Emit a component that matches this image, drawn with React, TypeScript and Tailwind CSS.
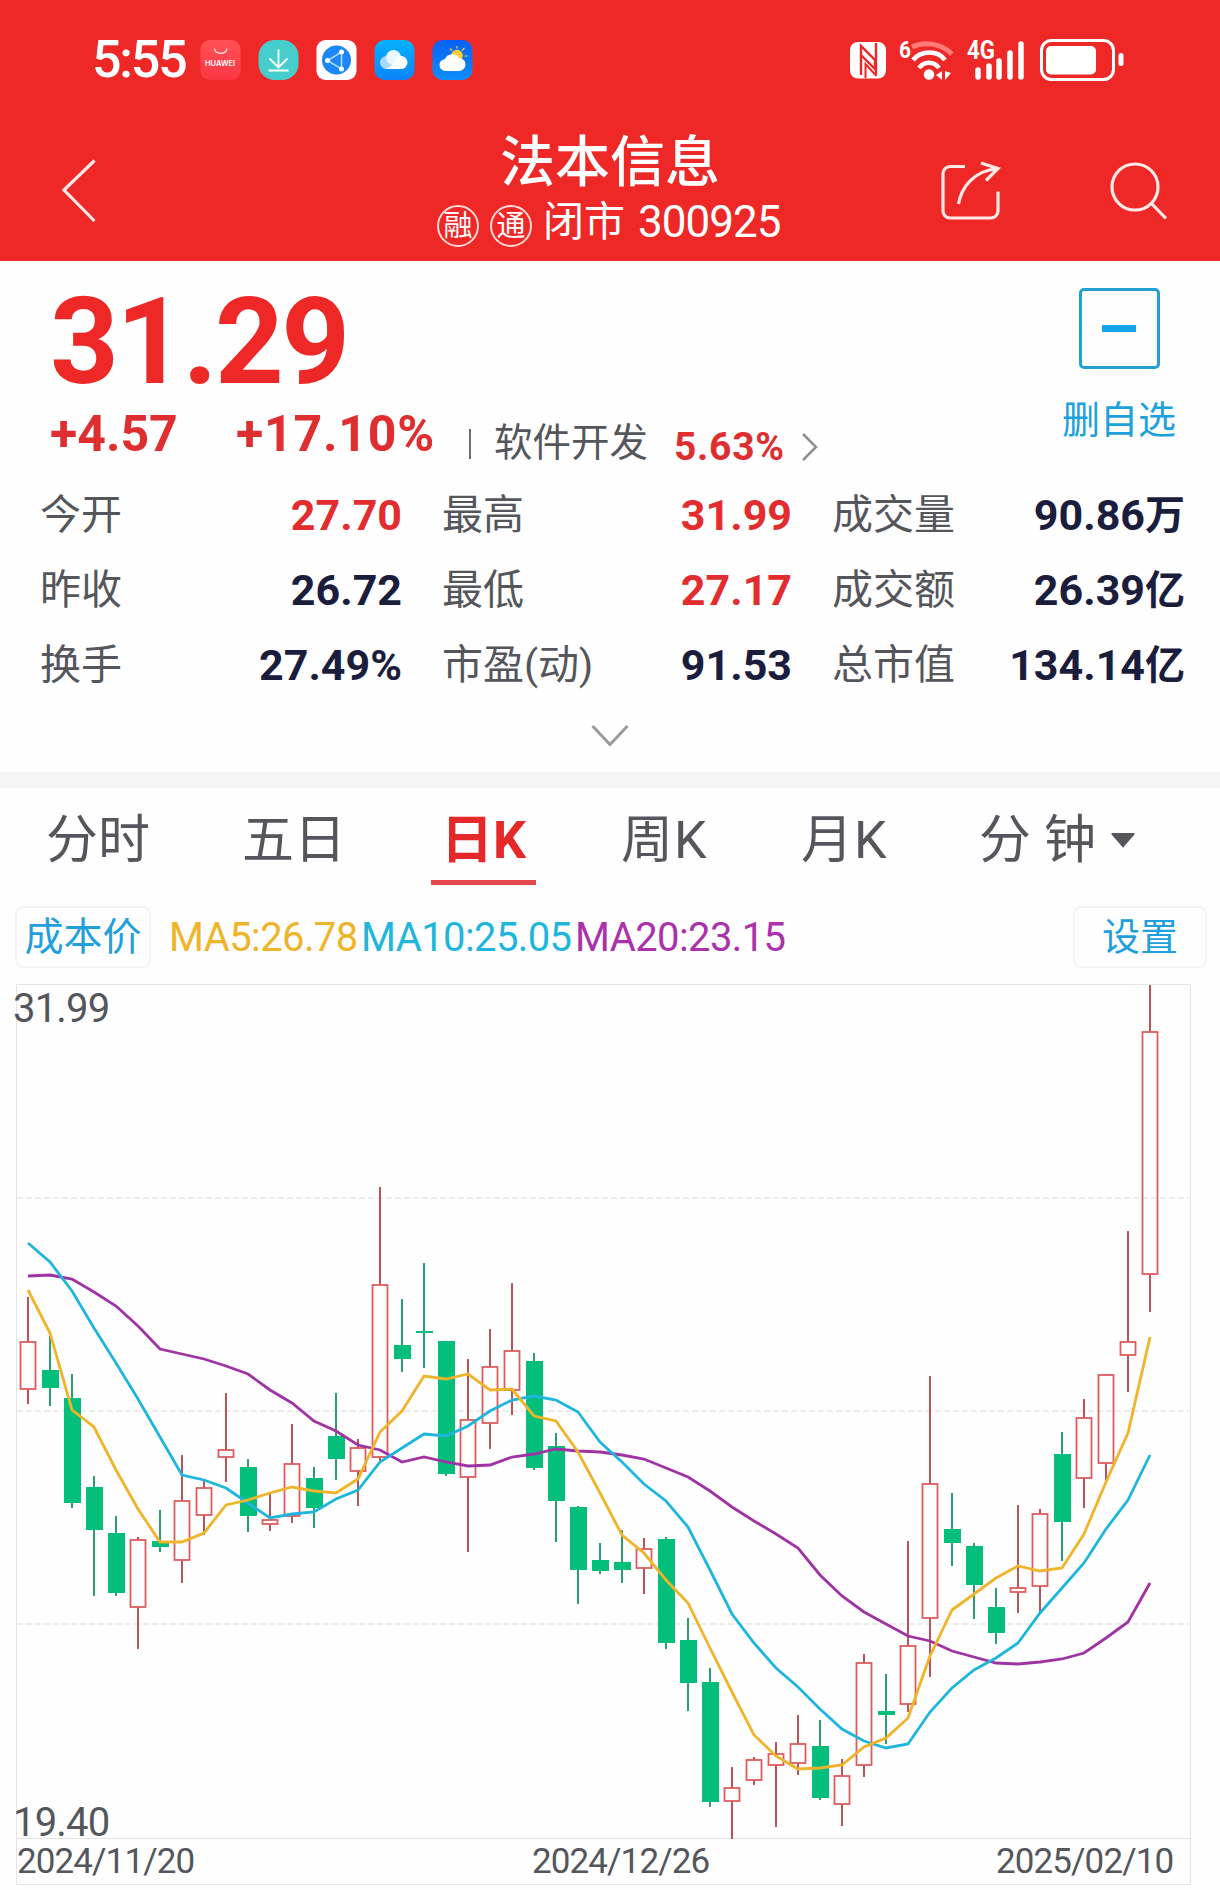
type Candle = [up: number, high: number, top: number, bottom: number, low: number];

const CANDLES: Candle[] = [
  [1, 1297, 1342, 1389, 1404],
  [0, 1336, 1370, 1388, 1406],
  [0, 1374, 1398, 1503, 1508],
  [0, 1476, 1487, 1530, 1596],
  [0, 1516, 1533, 1593, 1596],
  [1, 1537, 1540, 1607, 1649],
  [0, 1510, 1541, 1547, 1552],
  [1, 1455, 1501, 1560, 1583],
  [1, 1480, 1488, 1515, 1535],
  [1, 1393, 1450, 1457, 1482],
  [0, 1459, 1467, 1516, 1532],
  [1, 1494, 1520, 1524, 1531],
  [1, 1424, 1464, 1516, 1523],
  [0, 1467, 1478, 1508, 1528],
  [0, 1393, 1436, 1459, 1480],
  [1, 1439, 1448, 1471, 1506],
  [1, 1187, 1285, 1457, 1462],
  [0, 1299, 1345, 1359, 1372],
  [0, 1263, 1331, 1333, 1368],
  [0, 1341, 1341, 1474, 1476],
  [1, 1359, 1420, 1477, 1552],
  [1, 1329, 1367, 1423, 1449],
  [1, 1283, 1351, 1390, 1415],
  [0, 1353, 1361, 1468, 1470],
  [0, 1433, 1446, 1501, 1542],
  [0, 1506, 1507, 1570, 1604],
  [0, 1543, 1560, 1571, 1574],
  [0, 1530, 1562, 1570, 1583],
  [1, 1538, 1549, 1568, 1594],
  [0, 1537, 1539, 1643, 1649],
  [0, 1618, 1640, 1683, 1711],
  [0, 1668, 1682, 1802, 1807],
  [1, 1767, 1788, 1801, 1839],
  [1, 1757, 1760, 1780, 1785],
  [1, 1742, 1754, 1765, 1827],
  [1, 1715, 1744, 1763, 1775],
  [0, 1720, 1746, 1798, 1800],
  [1, 1759, 1776, 1804, 1826],
  [1, 1654, 1663, 1765, 1777],
  [0, 1674, 1711, 1715, 1744],
  [1, 1541, 1646, 1704, 1712],
  [1, 1376, 1484, 1618, 1677],
  [0, 1493, 1529, 1543, 1566],
  [0, 1543, 1546, 1585, 1619],
  [0, 1588, 1607, 1633, 1644],
  [1, 1505, 1588, 1592, 1613],
  [1, 1509, 1514, 1586, 1612],
  [0, 1432, 1454, 1522, 1561],
  [1, 1399, 1418, 1478, 1508],
  [1, 1375, 1375, 1463, 1480],
  [1, 1231, 1342, 1355, 1392],
  [1, 985, 1032, 1274, 1312],
];

const AVERAGES = [
  {
    color: "#a033a3",
    ys: [1276, 1275, 1279, 1292, 1306, 1326, 1349, 1354, 1359, 1366, 1374, 1390, 1403, 1421, 1431, 1445, 1450, 1462, 1457, 1462, 1466, 1465, 1457, 1454, 1449, 1451, 1452, 1455, 1459, 1468, 1477, 1491, 1507, 1521, 1534, 1548, 1575, 1596, 1612, 1624, 1636, 1641, 1651, 1657, 1663, 1664, 1662, 1659, 1653, 1638, 1622, 1583],
  },
  {
    color: "#1eb6dd",
    ys: [1243, 1262, 1291, 1328, 1363, 1399, 1437, 1475, 1480, 1488, 1503, 1518, 1514, 1512, 1499, 1490, 1462, 1448, 1434, 1436, 1426, 1411, 1400, 1396, 1400, 1412, 1442, 1462, 1484, 1501, 1527, 1570, 1614, 1643, 1668, 1687, 1709, 1729, 1741, 1748, 1744, 1712, 1688, 1670, 1658, 1643, 1613, 1588, 1563, 1529, 1500, 1455],
  },
  {
    color: "#efb429",
    ys: [1290, 1333, 1410, 1427, 1470, 1509, 1542, 1542, 1533, 1505, 1500, 1493, 1487, 1491, 1493, 1479, 1432, 1411, 1376, 1379, 1374, 1390, 1389, 1416, 1421, 1452, 1493, 1535, 1553, 1580, 1603, 1648, 1692, 1735, 1756, 1769, 1768, 1765, 1747, 1738, 1718, 1656, 1610, 1594, 1578, 1566, 1571, 1568, 1534, 1482, 1433, 1337],
  },
];

const STATS = [
  { label: "今开", value: "27.70", up: true },
  { label: "最高", value: "31.99", up: true },
  { label: "成交量", value: "90.86", unit: "万" },
  { label: "昨收", value: "26.72" },
  { label: "最低", value: "27.17", up: true },
  { label: "成交额", value: "26.39", unit: "亿" },
  { label: "换手", value: "27.49%" },
  { label: "市盈(动)", value: "91.53" },
  { label: "总市值", value: "134.14", unit: "亿" },
];

const candleX = (i: number) => 28 + i * 22;

function AppIcons() {
  return (
    <svg width="274" height="40" viewBox="0 0 274 40" aria-hidden="true">
      <defs>
        <linearGradient id="hw" x1="0" y1="0" x2="0" y2="1">
          <stop offset="0" stopColor="#ff5257" />
          <stop offset="1" stopColor="#fb3642" />
        </linearGradient>
        <linearGradient id="cloud" x1="0" y1="0" x2="0" y2="1">
          <stop offset="0" stopColor="#06b2fb" />
          <stop offset="1" stopColor="#0b84fb" />
        </linearGradient>
        <linearGradient id="sky" x1="0" y1="0" x2="0" y2="1">
          <stop offset="0" stopColor="#0860f4" />
          <stop offset="1" stopColor="#0d8ffc" />
        </linearGradient>
      </defs>
      <rect x="0.5" width="40" height="40" rx="9" fill="url(#hw)" />
      <path d="M14.500 8.500c1 6.500 11.500 6.500 12.500 0" fill="none" stroke="#fff" strokeWidth="1.200" />
      <text x="5" y="25.500" fontSize="7.500" fontWeight="600" fill="#fff" fontFamily="Inter, sans-serif">HUAWEI</text>
      <rect x="58.500" width="40" height="40" rx="16" fill="#47cdcb" />
      <path d="M78.500 9.500v17M69.500 18.500l9 9 9-9M68.500 30.500h20" fill="none" stroke="#fff" strokeWidth="1.800" />
      <rect x="116.500" width="40" height="40" rx="9" fill="#fff" />
      <circle cx="136.500" cy="20" r="14.500" fill="#1d88f4" />
      <path d="M127.500 20.500l14-8.500v17z" fill="none" stroke="#a8dcff" strokeWidth="1.500" />
      <g fill="#fff">
        <circle cx="127.500" cy="20.500" r="2.500" />
        <circle cx="141.500" cy="12" r="2.500" />
        <circle cx="141.500" cy="29" r="2.500" />
      </g>
      <rect x="174.500" width="40" height="40" rx="10" fill="url(#cloud)" />
      <circle cx="186.500" cy="22.500" r="6.500" fill="#a9dafc" />
      <circle cx="193.500" cy="17.500" r="7.500" fill="#eaf7ff" />
      <path d="M186 29h15a6.500 6.500 0 1 0-6-9c-2 5-5 7-9 9z" fill="#fff" />
      <rect x="232.500" width="40" height="40" rx="10" fill="url(#sky)" />
      <circle cx="257" cy="15.500" r="5.800" fill="#fbd034" />
      <path d="M257 8.500v-2.500M262 10.500l2.500-2.500M264.500 16h3M262.500 20l2.500 2M252 10.500l-2-2" stroke="#fbd034" strokeWidth="1.200" />
      <path d="M246 31a6 6 0 0 1-1-12 8 8 0 0 1 14-1 6.500 6.500 0 0 1 0 13z" fill="#fff" />
    </svg>
  );
}

function SystemIcons() {
  return (
    <svg width="280" height="46" viewBox="848 36 280 46" fill="none" aria-hidden="true">
      <rect x="850" y="41" width="36" height="36.500" rx="8" fill="#fff" />
      <path d="M861 74V45l14 14v9l-14-14" stroke="#ee2827" strokeWidth="2.400" />
      <path d="M876 42v31.500" stroke="#ee2827" strokeWidth="2.400" />
      <path d="M865.500 77V63l11 12" stroke="#ee2827" strokeWidth="2" />
      <text x="899" y="56.500" fontSize="24" fontWeight="700" fill="#fff" fontFamily="Roboto, sans-serif" textLength="12" lengthAdjust="spacingAndGlyphs">6</text>
      <path d="M912 46c12-6 29-4 40 7" stroke="#ff7b78" strokeWidth="5" />
      <path d="M913 59c8-10 25-10 32 0M919 67c5-7 15-7 20 0" stroke="#fff" strokeWidth="4.500" />
      <circle cx="929" cy="73.500" r="5.200" fill="#fff" />
      <path d="M942 70v9l-6-5zM945 70v9l6-7z" fill="#fff" />
      <text x="967" y="58" fontSize="25" fontWeight="700" fill="#fff" fontFamily="Roboto, sans-serif" textLength="28" lengthAdjust="spacingAndGlyphs">4G</text>
      <path d="M978 69v7M989 65v11M999 60v16M1010 52v24M1021 43v33" stroke="#fff" strokeWidth="5.500" strokeLinecap="round" />
      <rect x="1041.500" y="39.500" width="72" height="39" rx="10" stroke="#fff" strokeWidth="3" />
      <rect x="1046" y="45" width="50" height="28.500" rx="5" fill="#fff" />
      <rect x="1118.500" y="52" width="5" height="13" rx="2.500" fill="#fff" />
    </svg>
  );
}

function Header() {
  return (
    <header className="h-[261px] bg-[#ee2827] text-white">
      <div className="flex h-[100px] items-center justify-between px-[92px] pt-5">
        <div className="flex items-center gap-[13px]">
          <span className="w-[95px] whitespace-nowrap text-[52px] font-medium leading-none tracking-[-2.200px]">5:55</span>
          <AppIcons />
        </div>
        <SystemIcons />
      </div>
      <div className="flex h-[161px] items-start pl-[60px] pr-[52px]">
        <svg className="mt-[58px]" width="37" height="66" viewBox="60 158 37 66" fill="none" aria-hidden="true">
          <path d="M94.500 160.500L64 190l30.500 31" stroke="#ffe9e6" strokeWidth="3.200" />
        </svg>
        <div className="ml-[340px] w-[360px]">
          <h1 className="mt-[34px] pl-[63px] text-[55px] font-medium leading-[56px]">法本信息</h1>
          <div className="mt-[6px] flex h-[52px] items-center whitespace-nowrap">
            <span className="mt-2 grid size-[42px] place-items-center rounded-full border-2 border-[#ffd9d5] text-[29px] leading-none">融</span>
            <span className="ml-[11px] mt-2 grid size-[42px] place-items-center rounded-full border-2 border-[#ffd9d5] text-[29px] leading-none">通</span>
            <span className="ml-[11px] text-[41px] leading-none">闭市</span>
            <span className="ml-[13px] text-[44px] leading-none tracking-[-1px]">300925</span>
          </div>
        </div>
        <svg className="ml-auto mt-[60px]" width="230" height="62" viewBox="938 160 230 62" fill="none" stroke="#ffe9e6" strokeWidth="3.200" aria-hidden="true">
          <path d="M965 166.500h-15a7 7 0 0 0-7 7V211a7 7 0 0 0 7 7h41a7 7 0 0 0 7-7v-19.500M958.500 204c3-17 15-33 39-35.500M981 163l17 5.500-12 12" />
          <circle cx="1135" cy="187" r="23" />
          <path d="M1151 203l15 15.500" />
        </svg>
      </div>
    </header>
  );
}

function Quote() {
  return (
    <section className="h-[510px]">
      <div className="flex h-[216px] justify-between pl-[50px] pr-[43px]">
        <div className="whitespace-nowrap">
          <div className="mt-[21px] h-[120px] text-[120px] font-bold leading-[120px] tracking-[-2.500px] text-[#ee2827]">31.29</div>
          <div className="mt-[4px] flex h-[56px] items-center font-bold text-[#de2e30]">
            <span className="w-[186px] text-[50px] leading-none">+4.57</span>
            <span className="w-[233px] text-[50px] leading-none tracking-[0.800px]">+17.10%</span>
            <span className="mt-5 h-[30px] w-[2px] bg-[#6b6b70]" />
            <span className="ml-[23px] mt-[19px] w-[180px] text-[38.500px] font-normal leading-none text-[#55565c]">软件开发</span>
            <span className="mt-[26px] w-[127px] text-[39px] leading-none tracking-[0.700px]">5.63%</span>
            <svg className="mt-[26px]" width="18" height="28" viewBox="0 0 18 28" fill="none" aria-hidden="true">
              <path d="M2 1l13 13L2 27" stroke="#8f9094" strokeWidth="2.500" />
            </svg>
          </div>
        </div>
        <div className="flex w-[116px] flex-col items-center pt-[27px] text-[#1da1dc]">
          <div className="grid size-[81px] place-items-center rounded-[5px] border-[3px] border-[#249fd3]">
            <span className="h-[7px] w-[34px] bg-[#12a5ea]" />
          </div>
          <span className="mt-[30px] whitespace-nowrap text-[38px] leading-[42px]">删自选</span>
        </div>
      </div>
      <dl className="grid grid-cols-[362px_350px_353px] gap-x-[40px] pl-[40px]">
        {STATS.map((s) => (
          <div key={s.label} className="flex h-[75px] items-center justify-between whitespace-nowrap pt-0.5">
            <dt className="text-[41px] leading-none text-[#55565c]">{s.label}</dt>
            <dd className={s.up ? "flex items-center font-bold text-[#e22c2e]" : "flex items-center font-bold text-[#1b1d3c]"}>
              <span className="text-[43px] leading-none">{s.value}</span>
              {s.unit && <span className="text-[40px] leading-none">{s.unit}</span>}
            </dd>
          </div>
        ))}
      </dl>
      <svg className="mx-auto mt-[20px]" width="38" height="26" viewBox="0 0 38 26" fill="none" aria-hidden="true">
        <path d="M1.500 4L19 22.500 36.500 4" stroke="#9b9b9d" strokeWidth="3" />
      </svg>
    </section>
  );
}

function Tabs() {
  return (
    <nav className="flex h-[100px] items-start whitespace-nowrap pl-[46px] text-[52px] leading-[108px] text-[#55565c]">
      <span className="w-[196px]">分时</span>
      <span className="w-[189px]">五日</span>
      <span className="h-[98px] w-[105px] border-b-[5px] border-[#e5484c] text-center font-bold text-[#e5282a]">日K</span>
      <span className="ml-[85px] w-[180px] tracking-[1px]">周K</span>
      <span className="w-[178px] tracking-[1px]">月K</span>
      <span className="w-[132px]">分 钟</span>
      <svg className="mt-[45px]" width="24" height="16" viewBox="0 0 24 16" aria-hidden="true">
        <path d="M2 1h20a1 1 0 0 1 1 2L13 14.500a1 1 0 0 1-2 0L1 3a1 1 0 0 1 1-2z" fill="#55565c" />
      </svg>
    </nav>
  );
}

function Legend() {
  return (
    <div className="flex h-[97px] items-start whitespace-nowrap pl-[15px] pr-[13px] pt-[19px]">
      <button className="h-[62px] w-[136px] rounded-lg border-2 border-[#f4f4f4] text-[39px] leading-none text-[#1fa0dc]">成本价</button>
      <div className="ml-[18px] flex h-[63px] items-center text-[40px] leading-none tracking-[-0.600px]">
        <span className="w-[192px] text-[#efb429]">MA5:26.78</span>
        <span className="w-[214px] text-[#1eb6dd]">MA10:25.05</span>
        <span className="text-[#ab32aa]">MA20:23.15</span>
      </div>
      <button className="ml-auto h-[62px] w-[134px] rounded-lg border-2 border-[#f4f4f4] text-[38px] leading-none text-[#1fa0dc]">设置</button>
    </div>
  );
}

function Chart() {
  return (
    <section className="relative">
      <svg className="block" width="1220" height="906" viewBox="0 984 1220 906" fill="none" aria-label="日K">
        <path d="M16.500 1884.500v-900h1174v900zM16.500 1838.500h1174" stroke="#e4e4e4" />
        <path d="M17 1198h1173M17 1411h1173M17 1624h1173" stroke="#dcdcdc" strokeDasharray="6 3" />
        {CANDLES.map(([up, high, top, bottom, low], i) => {
          const x = candleX(i);
          return up ? (
            <g key={i}>
              <path d={`M${x} ${high}V${top}M${x} ${bottom}V${low}`} stroke="#b9545a" strokeWidth="2" />
              <rect x={x - 7.5} y={top} width="15" height={Math.max(bottom - top, 1)} stroke="#dd5c5e" strokeWidth="1.800" />
            </g>
          ) : (
            <g key={i}>
              <path d={`M${x} ${high}V${low}`} stroke="#2a9d72" strokeWidth="2" />
              <rect x={x - 8} y={top} width="17" height={bottom - top} fill="#04be7b" />
            </g>
          );
        })}
        {AVERAGES.map((a) => (
          <polyline key={a.color} points={a.ys.map((y, i) => `${candleX(i)},${y}`).join(" ")} stroke={a.color} strokeWidth="2.800" />
        ))}
      </svg>
      <span className="absolute left-[13px] top-[5px] text-[40px] leading-none tracking-[-0.800px] text-[#55565c]">31.99</span>
      <span className="absolute left-[13px] top-[819px] text-[40px] leading-none tracking-[-0.800px] text-[#55565c]">19.40</span>
      <div className="absolute left-[17px] top-[855px] flex text-[35px] leading-[46px] tracking-[-0.900px] text-[#55565c]">
        <span className="w-[515px]">2024/11/20</span>
        <span className="w-[464px]">2024/12/26</span>
        <span>2025/02/10</span>
      </div>
    </section>
  );
}

export default function App() {
  return (
    <div className="h-[1890px] w-[1220px] overflow-hidden bg-[#fefefe] font-['Roboto','Noto_Sans_CJK_SC',sans-serif]">
      <Header />
      <Quote />
      <div className="mt-px h-4 bg-[#f5f5f5]" />
      <div className="-mt-px">
        <Tabs />
        <Legend />
        <Chart />
      </div>
    </div>
  );
}
